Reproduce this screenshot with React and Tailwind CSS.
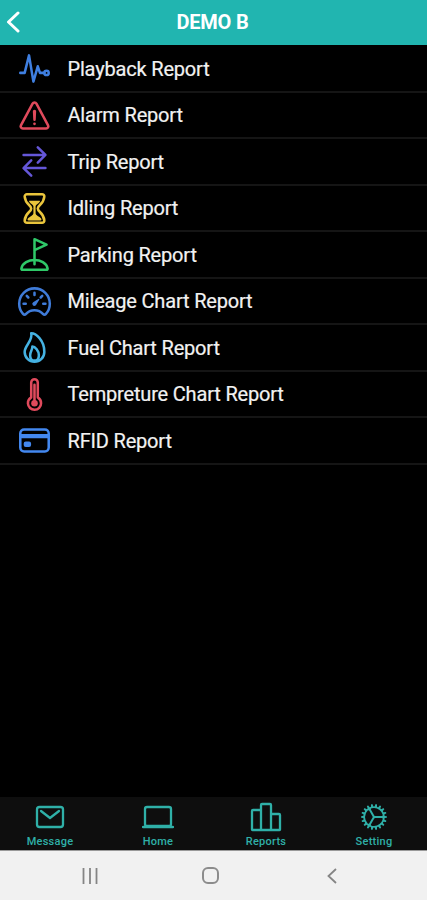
import {
  IoPulseOutline,
  IoWarningOutline,
  IoSwapHorizontalOutline,
  IoHourglassOutline,
  IoGolfOutline,
  IoSpeedometerOutline,
  IoFlameOutline,
  IoThermometerOutline,
  IoCardOutline,
  IoMailOutline,
  IoLaptopOutline,
  IoPodiumOutline,
  IoCogOutline,
} from 'react-icons/io5';

const reports = [
  { label: 'Playback Report', Icon: IoPulseOutline, color: 'text-[#3f7fe0]' },
  { label: 'Alarm Report', Icon: IoWarningOutline, color: 'text-[#e04a5c]' },
  { label: 'Trip Report', Icon: IoSwapHorizontalOutline, color: 'text-[#6557d8]' },
  { label: 'Idling Report', Icon: IoHourglassOutline, color: 'text-[#eac53c]' },
  { label: 'Parking Report', Icon: IoGolfOutline, color: 'text-[#2fc868]' },
  { label: 'Mileage Chart Report', Icon: IoSpeedometerOutline, color: 'text-[#3f7bd8]' },
  { label: 'Fuel Chart Report', Icon: IoFlameOutline, color: 'text-[#45b2e2]' },
  { label: 'Tempreture Chart Report', Icon: IoThermometerOutline, color: 'text-[#e04a5c]' },
  { label: 'RFID Report', Icon: IoCardOutline, color: 'text-[#4388f0]' },
];

const tabs = [
  { label: 'Message', Icon: IoMailOutline },
  { label: 'Home', Icon: IoLaptopOutline },
  { label: 'Reports', Icon: IoPodiumOutline },
  { label: 'Setting', Icon: IoCogOutline },
];

export default function App() {
  return (
    <div className="flex h-[900px] w-[427px] flex-col overflow-hidden bg-black font-['Roboto',sans-serif]">
      <header className="grid h-[45px] shrink-0 grid-cols-[40px_1fr_42px] items-center bg-[#21b5b0] pb-px text-white">
        <svg viewBox="0 0 14 22" className="ml-[6px] h-[22px] w-[14px]" fill="none" stroke="currentColor" strokeWidth="3" strokeLinecap="round" strokeLinejoin="round">
          <path d="M12 2 L2.5 11 L12 20" />
        </svg>
        <h1 className="text-center text-[20px] leading-none font-bold tracking-[-0.2px]">DEMO B</h1>
      </header>

      <ul className="flex-1 pt-px">
        {reports.map(({ label, Icon, color }) => (
          <li key={label} className="flex h-[46.5px] items-center border-b-2 border-[#151515] pt-[0.5px] pl-[16.5px]">
            <Icon className={`size-[35px] shrink-0 [&_[stroke-width='32']]:stroke-[37px] ${color}`} />
            <span className="ml-[16px] text-[20px] leading-none tracking-[-0.18px] whitespace-nowrap text-[#f2f2f2] [-webkit-text-stroke:0.2px_#f2f2f2]">{label}</span>
          </li>
        ))}
      </ul>

      <nav className="flex h-[53px] shrink-0 bg-[#0e0e0e] pr-px text-[#2fb0a8]">
        {tabs.map(({ label, Icon }) => (
          <div key={label} className="flex w-[108px] shrink-0 flex-col items-center pr-[8px] pt-[4px]">
            <Icon className="size-[32px] shrink-0 [&_[stroke-width='32']]:stroke-[37px]" />
            <span className="mt-[3px] text-[11px] leading-[12px] font-medium tracking-[0.25px]">{label}</span>
          </div>
        ))}
      </nav>

      <footer className="flex h-[50px] shrink-0 items-center border-t border-[#999999] bg-[#f1f1f1] text-[#858585]">
        <svg viewBox="0 0 16 16" className="ml-[82px] h-4 w-4" stroke="currentColor" strokeWidth="1.8">
          <path d="M1.5 0V16M8 0V16M14.5 0V16" />
        </svg>
        <span className="ml-[104px] h-[17px] w-[17px] rounded-[6px] border-2 border-[#8c8c8c]" />
        <svg viewBox="0 0 10 16" className="ml-[108px] h-4 w-[10px]" fill="none" stroke="currentColor" strokeWidth="1.8">
          <path d="M9 1 L1.5 8 L9 15" />
        </svg>
      </footer>
    </div>
  );
}
